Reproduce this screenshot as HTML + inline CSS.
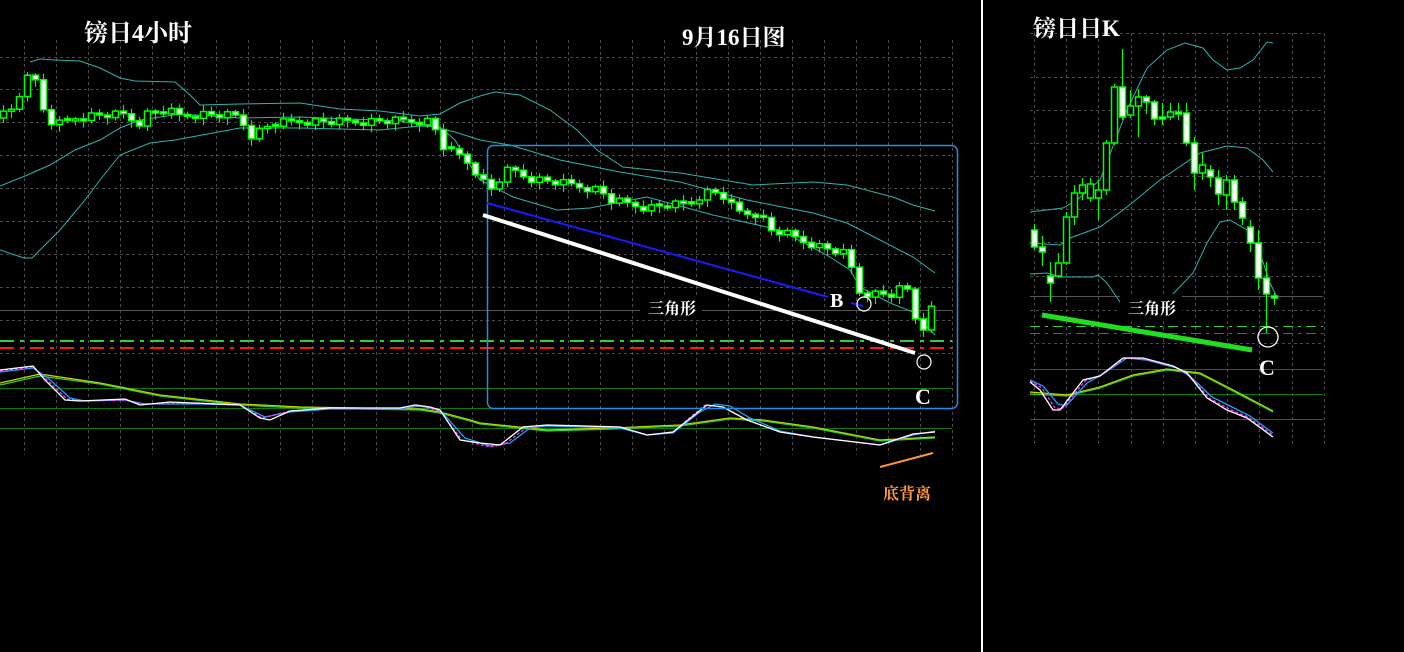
<!DOCTYPE html>
<html><head><meta charset="utf-8"><style>
html,body{margin:0;padding:0;background:#000;width:1404px;height:652px;overflow:hidden}
svg{display:block}
.t{font-family:"Liberation Serif","Noto Serif CJK SC","Noto Sans CJK SC",serif;font-weight:bold;fill:#fff}
</style></head><body>
<svg id="s" width="1404" height="652" viewBox="0 0 1404 652" xmlns="http://www.w3.org/2000/svg">
<rect width="1404" height="652" fill="#000"/>
<g id="grid" stroke="#4a4a4a" stroke-width="1" stroke-dasharray="3,3"></g>
<line x1="0" y1="310.5" x2="952" y2="310.5" stroke="#555" stroke-width="1"/>
<line x1="0" y1="341" x2="952" y2="341" stroke="#33cc33" stroke-width="2" stroke-dasharray="14,6,4,6"/>
<line x1="0" y1="348" x2="952" y2="348" stroke="#ff1a1a" stroke-width="2" stroke-dasharray="14,6,4,6"/>
<line x1="0" y1="388.5" x2="952" y2="388.5" stroke="#0a7a0a" stroke-width="1"/>
<line x1="0" y1="408.5" x2="952" y2="408.5" stroke="#0a7a0a" stroke-width="1"/>
<line x1="0" y1="428.5" x2="952" y2="428.5" stroke="#0a7a0a" stroke-width="1"/>
<line x1="1030" y1="296.5" x2="1323" y2="296.5" stroke="#555" stroke-width="1"/>
<line x1="1030" y1="326.5" x2="1323" y2="326.5" stroke="#33cc33" stroke-width="1" stroke-dasharray="10,5,3,5"/>
<line x1="1030" y1="333.5" x2="1323" y2="333.5" stroke="#ff1a1a" stroke-width="1" stroke-dasharray="10,5,3,5"/>
<line x1="1030" y1="369.5" x2="1323" y2="369.5" stroke="#0a7a0a" stroke-width="1"/>
<line x1="1030" y1="394.5" x2="1323" y2="394.5" stroke="#0a7a0a" stroke-width="1"/>
<line x1="1030" y1="419.5" x2="1323" y2="419.5" stroke="#0a7a0a" stroke-width="1"/>
<rect x="981" y="0" width="2" height="652" fill="#fff"/>
<g fill="none" stroke="#2fb3ad" stroke-width="1">
<polyline points="30,62 40,59 55,60 80,61 100,68 120,78 135,81 175,82 190,95 200,105 240,104 300,103 340,109 380,111 420,116 440,114 460,103 480,96 495,92 520,95 550,110 577,130 597,150 623,167 680,173 753,185 813,182 847,185 893,197 913,205 935,211"/>
<polyline points="0,186 25,176 50,165 75,150 100,140 120,128 140,120 180,114 240,118 300,117 400,121 430,126 455,132 480,140 510,145 560,160 620,172 680,182 747,200 813,213 847,223 880,240 913,257 935,273"/>
<polyline points="0,250 24,258 32,258 60,230 85,200 100,180 120,155 150,143 175,140 240,128 300,128 380,130 420,126 440,127 455,140 470,165 480,180 513,197 557,210 590,208 647,197 713,215 780,230 830,257 850,270 860,287 890,303 913,312 935,335"/>
<polyline points="1030,212 1063,208 1077,200 1100,180 1127,110 1147,68 1167,50 1185,43 1203,48 1213,60 1227,70 1240,68 1253,60 1267,42 1273,43"/>
<polyline points="1030,243 1060,245 1070,238 1100,227 1127,207 1160,180 1200,153 1227,146 1247,148 1263,160 1273,172"/>
<polyline points="1030,274 1047,273 1060,277 1093,277 1098,275 1107,283 1120,302"/>
<polyline points="1173,294 1193,273 1207,243 1220,222 1230,220 1247,230 1260,253 1270,283 1277,297"/>
</g>
<g id="candles"></g>
<g fill="none" stroke-width="1.3">
<polyline stroke="#c8d800" points="0,383 40,374 100,383 160,395 240,404 300,407 420,409 440,412 470,420 480,423 547,430 613,428 680,425 730,418 763,420 813,427 880,440 935,437"/>
<polyline stroke="#33cc33" points="0,385 40,376 100,384 160,396 240,405 300,408 420,410 440,413 470,421 480,424 547,431 613,429 680,426 730,419 763,421 813,428 880,441 935,438"/>
<polyline stroke="#1e9fff" points="0,372 33,368 48,378 70,398 85,401 125,400 145,404 200,404 240,405 265,417 290,412 330,409 400,409 420,406 440,410 465,438 490,446 510,443 530,428 547,426 620,428 647,435 673,433 700,412 715,404 730,406 750,418 780,431 813,437 880,445 913,435 935,431"/>
<polyline stroke="#ff33ff" stroke-dasharray="3,2" points="0,371 33,367 46,379 67,399 82,401 125,400 142,404 200,403 240,405 262,418 290,411 330,408 400,408 417,405 440,411 462,440 490,447 505,444 527,427 547,425 620,427 647,435 673,432 705,405 723,407 747,420 780,432 813,437 880,445 913,434 935,432"/>
<polyline stroke="#fff" points="0,370 33,366 45,380 65,400 80,401 125,399 140,405 170,402 240,405 260,418 270,420 290,411 330,408 400,408 415,405 430,407 440,410 460,440 480,443 500,445 523,427 547,425 620,427 647,435 673,432 707,405 723,407 747,420 780,432 813,437 880,445 913,434 935,432"/>
</g>
<g fill="none" stroke-width="1.3">
<polyline stroke="#c8d800" points="1030,392 1067,395 1100,387 1133,375 1167,369 1200,373 1233,390 1273,411"/>
<polyline stroke="#33cc33" points="1030,394 1067,396 1100,388 1133,376 1167,370 1200,374 1233,391 1273,412"/>
<polyline stroke="#1e9fff" points="1030,380 1043,386 1058,404 1066,406 1087,383 1103,374 1127,358 1146,360 1177,368 1192,378 1212,397 1232,407 1250,416 1273,433"/>
<polyline stroke="#ff33ff" stroke-dasharray="3,2" points="1030,381 1042,388 1055,408 1062,409 1085,381 1101,375 1125,358 1144,359 1175,367 1189,375 1209,398 1229,409 1248,417 1273,435"/>
<polyline stroke="#fff" points="1030,382 1040,390 1053,410 1060,410 1083,380 1100,376 1123,358 1143,358 1173,366 1187,373 1207,398 1227,410 1247,418 1273,437"/>
</g>
<rect x="487.5" y="145.5" width="470" height="263" rx="6" fill="none" stroke="#1e8fe6" stroke-width="1.5"/>
<line x1="487" y1="203" x2="828" y2="297" stroke="#1a1aff" stroke-width="2"/>
<line x1="851" y1="303" x2="863" y2="306" stroke="#1a1aff" stroke-width="2"/>
<line x1="483" y1="215" x2="915" y2="353" stroke="#fff" stroke-width="4"/>
<circle cx="864" cy="304" r="7" fill="none" stroke="#fff" stroke-width="1.2"/>
<circle cx="924" cy="362" r="7" fill="none" stroke="#fff" stroke-width="1.2"/>
<line x1="880" y1="467" x2="933" y2="453" stroke="#ff9933" stroke-width="2"/>
<line x1="1042" y1="315" x2="1252" y2="350" stroke="#22dd22" stroke-width="5"/>
<circle cx="1268" cy="337" r="10" fill="none" stroke="#fff" stroke-width="1.3"/>
<rect x="640" y="296" width="62" height="24" fill="#000"/>
<text class="t" x="648" y="314" font-size="16">三角形</text>
<rect x="1120" y="296" width="62" height="24" fill="#000"/>
<text class="t" x="1128" y="314" font-size="16">三角形</text>
<text class="t" x="830" y="307" font-size="20" font-weight="normal">B</text>
<text class="t" x="915" y="404" font-size="22" font-weight="normal">C</text>
<text class="t" x="1259" y="375" font-size="22" font-weight="normal">C</text>
<text class="t" x="883" y="499" font-size="16" style="fill:#ff9933">底背离</text>
<text class="t" x="84" y="41" font-size="24">镑日4小时</text>
<text class="t" x="682" y="45" font-size="23">9月16日图</text>
<text class="t" x="1033" y="36" font-size="23">镑日日K</text>
</svg>
<script>
var NS="http://www.w3.org/2000/svg";
function el(p,n,a){var e=document.createElementNS(NS,n);for(var k in a)e.setAttribute(k,a[k]);p.appendChild(e);return e;}
var g=document.getElementById('grid');
for(var x=24;x<=952;x+=32) el(g,'line',{x1:x+.5,y1:40,x2:x+.5,y2:455});
[57,89,122,155,188,221,254,287,320,353].forEach(function(y){el(g,'line',{x1:0,y1:y+.5,x2:952,y2:y+.5});});
for(var x=1034;x<=1324;x+=32.2) el(g,'line',{x1:Math.round(x)+.5,y1:33,x2:Math.round(x)+.5,y2:445});
[33,77,110,143,176,209,242,276,310,343].forEach(function(y){el(g,'line',{x1:1030,y1:y+.5,x2:1323,y2:y+.5});});
var c=document.getElementById('candles');
function candle(x,o,cl,h,l){
  var top=Math.min(o,cl),bot=Math.max(o,cl);if(bot-top<2){bot=top+2;}
  el(c,'line',{x1:x+.5,y1:h,x2:x+.5,y2:l,stroke:'#00ff00','stroke-width':1.2});
  el(c,'rect',{x:x-2.5,y:top,width:6,height:bot-top,fill:cl>o?'#fff':'#000',stroke:'#00ff00','stroke-width':1.5});
}
var kp=[[3,115],[10,112],[18,100],[24,72],[32,70],[40,103],[48,121],[56,124],[64,124],[72,118],[80,117],[96,115],[128,115],[136,127],[144,114],[160,112],[168,110],[176,116],[200,114],[232,116],[240,117],[248,136],[256,133],[264,128],[272,124],[300,121],[340,122],[380,121],[432,121],[440,144],[448,152],[456,154],[464,158],[472,168],[480,176],[488,192],[496,184],[504,172],[512,170],[528,178],[560,183],[600,190],[608,200],[624,203],[648,208],[664,205],[688,205],[704,192],[720,193],[736,212],[760,214],[768,230],[784,233],[800,240],[824,248],[848,255],[856,291],[864,293],[896,295],[904,281],[912,306],[920,337],[928,308],[936,310]];
function interp(x){for(var i=1;i<kp.length;i++){if(x<=kp[i][0]){var a=kp[i-1],b=kp[i];return a[1]+(b[1]-a[1])*(x-a[0])/(b[0]-a[0]);}}return kp[kp.length-1][1];}
var prev=118;
for(var x=3;x<=936;x+=8){
  var j=((Math.round(x/8)*37)%7-3)*1.3;
  var cl=interp(x)+j;
  var o=prev; if(Math.abs(cl-o)<1.5){o=cl-2;}
  var h=Math.min(o,cl)-2-((x*13)%5);var l=Math.max(o,cl)+2+((x*7)%6);
  candle(x,o,cl,h,l);prev=cl;
}
var R=[[1034,230,247,224,250],[1042,247,252,236,266],[1050,276,283,262,302],[1058,276,263,253,278],[1066,263,217,212,265],[1074,217,193,185,225],[1082,193,185,178,200],[1090,198,184,178,202],[1098,198,190,180,220],[1106,190,143,140,195],[1114,143,87,84,145],[1122,87,117,49,120],[1130,115,106,90,118],[1138,106,97,89,137],[1146,97,102,95,114],[1154,102,119,100,125],[1162,117,118,103,125],[1170,117,112,103,120],[1178,112,113,103,120],[1186,113,143,103,146],[1194,143,173,137,190],[1202,173,165,153,180],[1210,170,177,165,187],[1218,178,194,170,205],[1226,195,180,175,210],[1234,180,202,175,210],[1242,202,218,197,225],[1250,227,243,220,252],[1258,243,278,230,290],[1266,278,294,262,333],[1274,296,297,293,305]];
R.forEach(function(r){candle(r[0],r[1],r[2],r[3],r[4]);});
</script>
</body></html>
